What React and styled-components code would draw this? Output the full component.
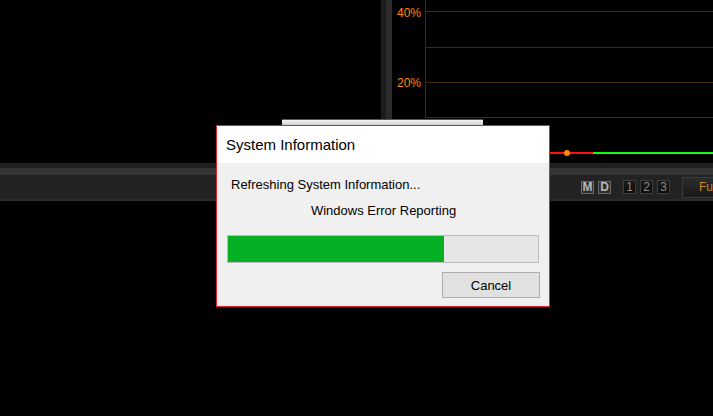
import React from "react";
import styled, { createGlobalStyle } from "styled-components";

const GlobalStyle = createGlobalStyle`
  html, body {
    margin: 0;
    padding: 0;
    background: #000;
    overflow: hidden;
  }
`;

const Screen = styled.div`
  position: relative;
  width: 713px;
  height: 416px;
  background: #000;
  overflow: hidden;
  font-family: "Liberation Sans", Arial, sans-serif;
`;

const TopArea = styled.div`
  display: flex;
  height: 163px;
`;

const EmptyPane = styled.div`
  width: 381px;
  flex-shrink: 0;
`;

const Splitter = styled.div`
  width: 11px;
  flex-shrink: 0;
  background: linear-gradient(to right, #1c1c1c 0, #1c1c1c 5px, #2b2b2b 5px, #2b2b2b 100%);
`;

const ChartPane = styled.div`
  flex: 1;
`;

const Band = styled.div`
  display: flex;
  align-items: center;
  height: 38px;
  box-sizing: border-box;
  padding: 12px 0 2px 581px;
  background: linear-gradient(
    to bottom,
    #1f1f1f 0,
    #1f1f1f 5px,
    #353535 5px,
    #353535 12px,
    #232323 12px,
    #232323 36px,
    #2c2c2c 36px,
    #2c2c2c 38px
  );
`;

const ModeKey = styled.div`
  width: 11px;
  height: 11px;
  margin-right: ${(p) => p.gap}px;
  border: 1px solid #6a6a6a;
  background: #2e2e2e;
  color: #b8b8b8;
  font-size: 12px;
  font-weight: bold;
  line-height: 11px;
  text-align: center;
  flex-shrink: 0;
`;

const PageKey = styled.div`
  width: 11px;
  height: 12px;
  margin-right: ${(p) => p.gap}px;
  border: 1px solid #3e3e3e;
  background: linear-gradient(#1a1a1a, #0c0c0c);
  color: #8a8a8a;
  font-size: 12px;
  line-height: 12px;
  text-align: center;
  flex-shrink: 0;
`;

const WideButton = styled.div`
  width: 90px;
  height: 19px;
  flex-shrink: 0;
  border: 1px solid #3a3a3a;
  background: linear-gradient(#2c2c2c, #181818);
  color: #c98a26;
  font-size: 12px;
  line-height: 19px;
  padding-left: 16px;
`;

const BehindBar = styled.div`
  position: absolute;
  left: 282px;
  top: 119px;
  width: 201px;
  height: 6px;
  background: linear-gradient(#f4f4f4, #cfcfcf);
  border-top: 1px solid #555;
  box-sizing: border-box;
`;

const Dialog = styled.div`
  position: absolute;
  left: 216px;
  top: 125px;
  width: 334px;
  height: 182px;
  box-sizing: border-box;
  border: 1px solid #e3202e;
  background: #f0f0f0;
  display: flex;
  flex-direction: column;
`;

const TitleBar = styled.div`
  height: 37px;
  background: #fff;
  display: flex;
  align-items: center;
  padding-left: 9px;
  font-size: 15px;
  color: #000;
`;

const Body = styled.div`
  flex: 1;
  display: flex;
  flex-direction: column;
  padding: 14px 9px 8px 10px;
  font-size: 13px;
  color: #000;
`;

const Status = styled.div`
  line-height: 16px;
  padding-left: 4px;
`;

const Detail = styled.div`
  line-height: 16px;
  margin-top: 10px;
  text-align: center;
`;

const Track = styled.div`
  margin-top: 16px;
  width: 312px;
  height: 28px;
  box-sizing: border-box;
  border: 1px solid #bcbcbc;
  background: #e6e6e6;
`;

const Fill = styled.div`
  height: 100%;
  background: #06b025;
`;

const Actions = styled.div`
  display: flex;
  justify-content: flex-end;
  margin-top: 9px;
`;

const CancelButton = styled.div`
  width: 98px;
  height: 26px;
  box-sizing: border-box;
  border: 1px solid #adadad;
  background: #e1e1e1;
  display: flex;
  align-items: center;
  justify-content: center;
  font-size: 13px;
`;

const Chart = () => (
  <svg width="321" height="163" style={{ display: "block" }}>
    <g stroke="#45290c" strokeWidth="1">
      <line x1="33.5" y1="0" x2="33.5" y2="117.5" />
      {[11.5, 47.5, 82.5, 117.5].map((y) => (
        <line key={y} x1="33" y1={y} x2="321" y2={y} />
      ))}
    </g>
    <g fill="#ff8a00" fontSize="12" fontFamily="Liberation Sans, Arial, sans-serif" textAnchor="end">
      <text x="29" y="17">40%</text>
      <text x="29" y="86.5">20%</text>
    </g>
    <line x1="33" y1="153" x2="201" y2="153" stroke="#ff1010" strokeWidth="2" />
    <line x1="201" y1="153" x2="321" y2="153" stroke="#10ff10" strokeWidth="2" />
    <circle cx="175" cy="153" r="3" fill="#ff8a00" />
  </svg>
);

export default function App() {
  const progress = 69.7;
  return (
    <>
      <GlobalStyle />
      <Screen>
        <TopArea>
          <EmptyPane />
          <Splitter />
          <ChartPane>
            <Chart />
          </ChartPane>
        </TopArea>
        <Band>
          <ModeKey gap={4}>M</ModeKey>
          <ModeKey gap={12}>D</ModeKey>
          <PageKey gap={4}>1</PageKey>
          <PageKey gap={4}>2</PageKey>
          <PageKey gap={12}>3</PageKey>
          <WideButton>Fu</WideButton>
        </Band>

        <BehindBar />
        <Dialog>
          <TitleBar>System Information</TitleBar>
          <Body>
            <Status>Refreshing System Information...</Status>
            <Detail>Windows Error Reporting</Detail>
            <Track>
              <Fill style={{ width: `${progress}%` }} />
            </Track>
            <Actions>
              <CancelButton>Cancel</CancelButton>
            </Actions>
          </Body>
        </Dialog>
      </Screen>
    </>
  );
}
